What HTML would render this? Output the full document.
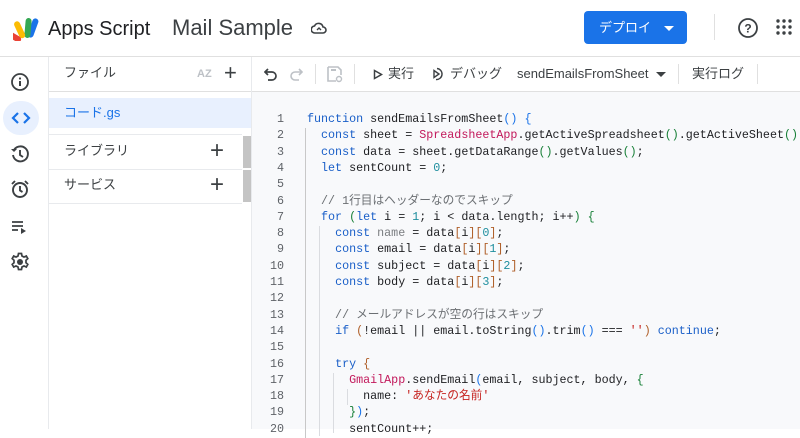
<!DOCTYPE html>
<html><head><meta charset="utf-8"><style>
*{margin:0;padding:0;box-sizing:border-box}
body{width:800px;height:429px;overflow:hidden;background:#fff;font-family:"Liberation Sans","Noto Sans CJK JP",sans-serif;color:#3c4043;position:relative}
.abs{position:absolute;line-height:16px}
.code{position:absolute;left:252px;top:92px;right:0;bottom:0;background:#f8f9fb;font-family:"Liberation Mono","Noto Sans CJK JP",monospace;font-size:11.7px}
.ln{position:absolute;left:0;width:32px;text-align:right;color:#5f6368;line-height:16px}
.tx{position:absolute;left:55px;white-space:pre;color:#202124;line-height:16px}
.k{color:#1a5fc8}.p{color:#c2185b}.n{color:#1e8e9e}.g{color:#188038}.c{color:#6b6f73}.s{color:#c5221f}.v{color:#7a7d80}.b{color:#1a73e8}.o{color:#b0602a}
</style></head><body>
<svg class="abs" style="left:13px;top:17px" width="28" height="24" viewBox="0 0 28 24">
<rect x="17" y="1" width="6" height="20" rx="3" transform="rotate(20 20 11)" fill="#1a73e8"/>
<rect x="12" y="1" width="6" height="20" rx="3" transform="rotate(5 15 11)" fill="#34a853"/>
<rect x="7" y="3" width="6" height="18" rx="3" transform="rotate(-25 10 20)" fill="#fbbc04"/>
<rect x="2" y="8" width="6" height="15" rx="3" transform="rotate(-60 7 21)" fill="#ea4335"/>
</svg>
<div class="abs" style="left:48px;top:18px;font-size:20px;line-height:22px;color:#202124">Apps Script</div>
<div class="abs" style="left:172px;top:16px;font-size:22px;line-height:24px;color:#3c4043">Mail Sample</div>
<svg class="abs" style="left:311px;top:21px" width="16" height="14" viewBox="0 0 16 14"><path d="M4 12h8a3 3 0 0 0 0-6 4.5 4.5 0 0 0-8.5-1A3.5 3.5 0 0 0 4 12z" fill="none" stroke="#3c4043" stroke-width="1.6"/><path d="M6 9l2-2 2 2" fill="none" stroke="#3c4043" stroke-width="1.4"/></svg>
<div class="abs" style="left:584px;top:11px;width:103px;height:33px;background:#1a73e8;border-radius:4px;color:#fff;font-size:13px;line-height:33px;padding-left:15px">デプロイ</div>
<div class="abs" style="left:664px;top:26px;border-left:5px solid transparent;border-right:5px solid transparent;border-top:5px solid #fff"></div>
<div class="abs" style="left:714px;top:14px;width:1px;height:26px;background:#e0e0e0"></div>
<svg class="abs" style="left:737px;top:17px" width="22" height="22" viewBox="0 0 22 22"><circle cx="11" cy="11" r="9" fill="none" stroke="#3c4043" stroke-width="1.8"/><text x="11" y="15.5" text-anchor="middle" font-size="12" font-weight="bold" fill="#3c4043" font-family="Liberation Sans">?</text></svg>
<svg class="abs" style="left:776px;top:19px" width="16" height="16" viewBox="0 0 16 16" fill="#3c4043"><circle cx="2" cy="2" r="1.7"/><circle cx="8" cy="2" r="1.7"/><circle cx="14" cy="2" r="1.7"/><circle cx="2" cy="8" r="1.7"/><circle cx="8" cy="8" r="1.7"/><circle cx="14" cy="8" r="1.7"/><circle cx="2" cy="14" r="1.7"/><circle cx="8" cy="14" r="1.7"/><circle cx="14" cy="14" r="1.7"/></svg>
<div class="abs" style="left:0;top:56px;width:800px;height:1px;background:#e0e0e0"></div>
<div class="abs" style="left:48px;top:57px;width:1px;height:372px;background:#e8eaed"></div>
<svg class="abs" style="left:10px;top:72px" width="20" height="20" viewBox="0 0 20 20"><circle cx="10" cy="10" r="8" fill="none" stroke="#3c4043" stroke-width="1.8"/><rect x="9" y="9" width="2" height="5" fill="#3c4043"/><circle cx="10" cy="6.5" r="1.1" fill="#3c4043"/></svg>
<div class="abs" style="left:3px;top:101px;width:36px;height:34px;border-radius:17px;background:#e8f0fe"></div>
<svg class="abs" style="left:11px;top:110px" width="20" height="16" viewBox="0 0 20 16"><path d="M7 3L2 8l5 5M13 3l5 5-5 5" fill="none" stroke="#1a73e8" stroke-width="2.2"/></svg>
<svg class="abs" style="left:10px;top:144px" width="20" height="20" viewBox="0 0 20 20"><path d="M3.5 7A7.5 7.5 0 1 1 3 11" fill="none" stroke="#3c4043" stroke-width="1.9"/><path d="M1 5l3 3 3-3" fill="#3c4043"/><path d="M10 6v5l3 2" fill="none" stroke="#3c4043" stroke-width="1.9"/></svg>
<svg class="abs" style="left:10px;top:179px" width="20" height="20" viewBox="0 0 20 20"><circle cx="10" cy="11" r="7" fill="none" stroke="#3c4043" stroke-width="1.9"/><path d="M10 7v4.5l2.5 1.5M2 5l3-3M18 5l-3-3" fill="none" stroke="#3c4043" stroke-width="1.9"/></svg>
<svg class="abs" style="left:11px;top:219px" width="20" height="16" viewBox="0 0 20 16"><path d="M1 3h11M1 7h11M1 11h6" stroke="#3c4043" stroke-width="1.8"/><path d="M10 9l5 3-5 3z" fill="#3c4043"/></svg>
<svg class="abs" style="left:10px;top:252px" width="20" height="20" viewBox="0 0 20 20"><circle cx="10" cy="10" r="3" fill="#3c4043"/><path d="M8.5 1.5h3l.5 2.5 2 1 2.3-1 1.5 2.6-1.8 1.7v2.4l1.8 1.7-1.5 2.6-2.3-1-2 1-.5 2.5h-3l-.5-2.5-2-1-2.3 1-1.5-2.6 1.8-1.7V8.3L2.2 6.6l1.5-2.6 2.3 1 2-1z" fill="none" stroke="#3c4043" stroke-width="1.7"/></svg>
<div class="abs" style="left:64px;top:65px;font-size:13px;color:#3c4043">ファイル</div>
<div class="abs" style="left:197px;top:66px;font-size:11px;color:#bdc1c6;font-weight:bold">AZ</div>
<div class="abs" style="left:224px;top:62px;font-size:22px;color:#3c4043;line-height:22px">+</div>
<div class="abs" style="left:49px;top:91px;width:203px;height:1px;background:#e0e0e0"></div>
<div class="abs" style="left:49px;top:98px;width:203px;height:30px;background:#e8f0fe"></div>
<div class="abs" style="left:64px;top:105px;font-size:13px;color:#1a73e8">コード.gs</div>
<div class="abs" style="left:49px;top:134px;width:193px;height:1px;background:#e8eaed"></div>
<div class="abs" style="left:64px;top:143px;font-size:13px;color:#3c4043">ライブラリ</div>
<div class="abs" style="left:210px;top:139px;font-size:24px;color:#3c4043;line-height:24px">+</div>
<div class="abs" style="left:49px;top:169px;width:193px;height:1px;background:#e8eaed"></div>
<div class="abs" style="left:64px;top:177px;font-size:13px;color:#3c4043">サービス</div>
<div class="abs" style="left:210px;top:173px;font-size:24px;color:#3c4043;line-height:24px">+</div>
<div class="abs" style="left:49px;top:203px;width:193px;height:1px;background:#e8eaed"></div>
<div class="abs" style="left:243px;top:136px;width:8px;height:32px;background:#c4c4c4"></div>
<div class="abs" style="left:243px;top:170px;width:8px;height:32px;background:#c4c4c4"></div>
<div class="abs" style="left:251px;top:57px;width:1px;height:372px;background:#e8eaed"></div>
<svg class="abs" style="left:264px;top:67px" width="14" height="14" viewBox="0 0 14 14"><path d="M4 2L1 5l3 3" fill="none" stroke="#3c4043" stroke-width="1.7"/><path d="M1 5h7a4 4 0 0 1 0 8H4" fill="none" stroke="#3c4043" stroke-width="1.7"/></svg>
<svg class="abs" style="left:289px;top:67px" width="14" height="14" viewBox="0 0 14 14"><path d="M10 2l3 3-3 3" fill="none" stroke="#bdc1c6" stroke-width="1.6"/><path d="M13 5H6a4 4 0 0 0 0 8h4" fill="none" stroke="#bdc1c6" stroke-width="1.6"/></svg>
<div class="abs" style="left:315px;top:64px;width:1px;height:20px;background:#e0e0e0"></div>
<svg class="abs" style="left:326px;top:65px" width="18" height="18" viewBox="0 0 18 18"><path d="M2 2h10l3 3v5M2 2v14h8" fill="none" stroke="#bdc1c6" stroke-width="1.6"/><rect x="5" y="4" width="5" height="2" fill="#bdc1c6"/><circle cx="13" cy="14" r="2.5" fill="none" stroke="#bdc1c6" stroke-width="1.4"/></svg>
<div class="abs" style="left:354px;top:64px;width:1px;height:20px;background:#e0e0e0"></div>
<svg class="abs" style="left:373px;top:69px" width="10" height="11" viewBox="0 0 10 11"><path d="M1.5 1.5v8l7-4z" fill="none" stroke="#3c4043" stroke-width="1.5"/></svg>
<div class="abs" style="left:388px;top:66px;font-size:13px;color:#3c4043">実行</div>
<svg class="abs" style="left:431px;top:67px" width="14" height="14" viewBox="0 0 14 14"><path d="M3 3.5l5 3.5-5 3.5z" fill="none" stroke="#3c4043" stroke-width="1.4"/><path d="M6 1.5a5.5 5.5 0 1 1-1 11" fill="none" stroke="#3c4043" stroke-width="1.4"/></svg>
<div class="abs" style="left:450px;top:66px;font-size:13px;color:#3c4043">デバッグ</div>
<div class="abs" style="left:517px;top:66px;font-size:13px;color:#3c4043">sendEmailsFromSheet</div>
<div class="abs" style="left:656px;top:72px;border-left:5px solid transparent;border-right:5px solid transparent;border-top:5px solid #3c4043"></div>
<div class="abs" style="left:678px;top:64px;width:1px;height:20px;background:#e0e0e0"></div>
<div class="abs" style="left:692px;top:66px;font-size:13px;color:#3c4043">実行ログ</div>
<div class="abs" style="left:757px;top:64px;width:1px;height:20px;background:#e0e0e0"></div>
<div class="abs" style="left:252px;top:91px;width:548px;height:1px;background:#e0e0e0"></div>
<div class="code">
<div class="abs" style="left:53px;top:36px;width:1px;height:310px;background:#c8c8c8"></div>
<div class="abs" style="left:67px;top:134px;width:1px;height:210px;background:#dadce0"></div>
<div class="abs" style="left:81px;top:281px;width:1px;height:60px;background:#dadce0"></div>
<div class="abs" style="left:95px;top:297px;width:1px;height:16px;background:#dadce0"></div>
<div class="ln" style="top:19px">1</div><div class="tx" style="top:19px"><span class="k">function</span> sendEmailsFromSheet<span class="b">()</span> <span class="b">{</span></div>
<div class="ln" style="top:35.3px">2</div><div class="tx" style="top:35.3px">  <span class="k">const</span> sheet = <span class="p">SpreadsheetApp</span>.getActiveSpreadsheet<span class="g">()</span>.getActiveSheet<span class="g">()</span>;</div>
<div class="ln" style="top:51.6px">3</div><div class="tx" style="top:51.6px">  <span class="k">const</span> data = sheet.getDataRange<span class="g">()</span>.getValues<span class="g">()</span>;</div>
<div class="ln" style="top:67.9px">4</div><div class="tx" style="top:67.9px">  <span class="k">let</span> sentCount = <span class="n">0</span>;</div>
<div class="ln" style="top:84.2px">5</div>
<div class="ln" style="top:100.5px">6</div><div class="tx c" style="top:100.5px">  // 1行目はヘッダーなのでスキップ</div>
<div class="ln" style="top:116.8px">7</div><div class="tx" style="top:116.8px">  <span class="k">for</span> <span class="g">(</span><span class="k">let</span> i = <span class="n">1</span>; i &lt; data.length; i++<span class="g">)</span> <span class="g">{</span></div>
<div class="ln" style="top:133.1px">8</div><div class="tx" style="top:133.1px">    <span class="k">const</span> <span class="v">name</span> = data<span class="o">[</span>i<span class="o">][</span><span class="n">0</span><span class="o">]</span>;</div>
<div class="ln" style="top:149.4px">9</div><div class="tx" style="top:149.4px">    <span class="k">const</span> email = data<span class="o">[</span>i<span class="o">][</span><span class="n">1</span><span class="o">]</span>;</div>
<div class="ln" style="top:165.7px">10</div><div class="tx" style="top:165.7px">    <span class="k">const</span> subject = data<span class="o">[</span>i<span class="o">][</span><span class="n">2</span><span class="o">]</span>;</div>
<div class="ln" style="top:182px">11</div><div class="tx" style="top:182px">    <span class="k">const</span> body = data<span class="o">[</span>i<span class="o">][</span><span class="n">3</span><span class="o">]</span>;</div>
<div class="ln" style="top:198.3px">12</div>
<div class="ln" style="top:214.6px">13</div><div class="tx c" style="top:214.6px">    // メールアドレスが空の行はスキップ</div>
<div class="ln" style="top:230.9px">14</div><div class="tx" style="top:230.9px">    <span class="k">if</span> <span class="o">(</span>!email || email.toString<span class="b">()</span>.trim<span class="b">()</span> === <span class="s">''</span><span class="o">)</span> <span class="k">continue</span>;</div>
<div class="ln" style="top:247.2px">15</div>
<div class="ln" style="top:263.5px">16</div><div class="tx" style="top:263.5px">    <span class="k">try</span> <span class="o">{</span></div>
<div class="ln" style="top:279.8px">17</div><div class="tx" style="top:279.8px">      <span class="p">GmailApp</span>.sendEmail<span class="b">(</span>email, subject, body, <span class="g">{</span></div>
<div class="ln" style="top:296.1px">18</div><div class="tx" style="top:296.1px">        name: <span class="s">'あなたの名前'</span></div>
<div class="ln" style="top:312.4px">19</div><div class="tx" style="top:312.4px">      <span class="g">}</span><span class="b">)</span>;</div>
<div class="ln" style="top:328.7px">20</div><div class="tx" style="top:328.7px">      sentCount++;</div>
</div>
</body></html>
